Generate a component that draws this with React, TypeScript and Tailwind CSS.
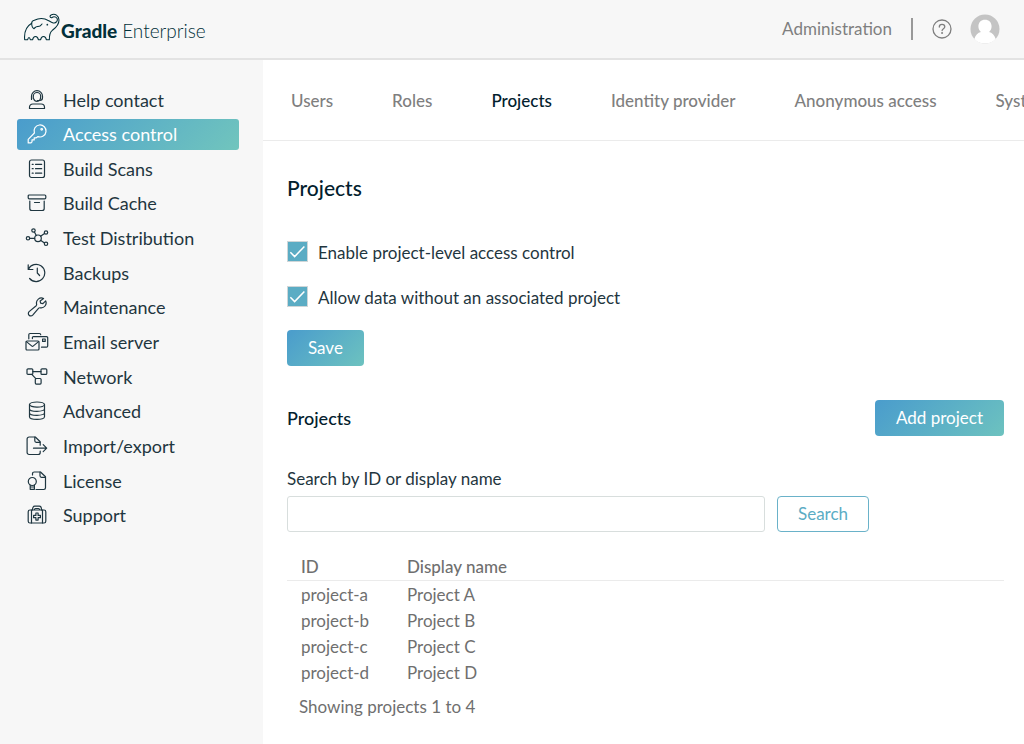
import type { ReactNode } from 'react';

interface NavItem {
  label: string;
  icon: ReactNode;
}

interface CheckboxProps {
  id: string;
  label: string;
}

const NAV: NavItem[] = [
  {
    label: 'Help contact',
    icon: (
      <>
        <path d="M4.5 18.5v-1.2c0-2 1.400-3.300 3.300-3.300h8.400c1.900 0 3.300 1.300 3.300 3.300v1.200z" />
        <path d="M6.500 9.500V6.200a5.500 5.500 0 0 1 11 0v1.600c0 1.600-1 2.700-2.700 2.700h-2.300" />
        <path d="M8.300 8.500V6.200a3.700 3.700 0 0 1 7.400 0c0 3-1.600 5.100-3.700 5.100-1.500 0-2.800-1-3.400-2.600" />
      </>
    ),
  },
  {
    label: 'Access control',
    icon: (
      <>
        <path d="M9.400 9A6 6 0 1 1 13 12.600l-1.700 1.200H9.200v2.100H7v2L6 18.900H3.200v-3.500z" />
        <circle cx="16.700" cy="5.300" r=".8" />
      </>
    ),
  },
  {
    label: 'Build Scans',
    icon: (
      <>
        <rect x="4.500" y="1" width="15" height="17.500" rx="2" />
        <path d="M7.200 5.300h1M10.500 5.300h6.200M7.200 9.700h1M10.500 9.700h6.200M7.200 14.200h1M10.500 14.200h6.200" />
      </>
    ),
  },
  {
    label: 'Build Cache',
    icon: (
      <>
        <rect x="3.200" y="2" width="17.600" height="3.800" rx="1" />
        <path d="M4.800 8v7.500a2 2 0 0 0 2 2h10.400a2 2 0 0 0 2-2V8M9.500 9.500h5" />
      </>
    ),
  },
  {
    label: 'Test Distribution',
    icon: (
      <>
        <circle cx="13" cy="10.300" r="3.300" />
        <circle cx="3" cy="10.300" r="1.700" />
        <circle cx="8.500" cy="2.500" r="1.700" />
        <circle cx="21" cy="4.500" r="1.700" />
        <circle cx="21" cy="15.800" r="1.700" />
        <path d="M4.700 10.300h5M9.400 4l1.900 3.500M19.500 5.400l-3.900 2.800M19.500 15l-3.600-2.600" />
      </>
    ),
  },
  {
    label: 'Backups',
    icon: (
      <>
        <path d="M3.200 1.800v4.700h4.700M3.400 6.300A8.600 8.600 0 1 1 4.600 15.500" />
        <path d="M12.300 5.200v4.800l2.300 2.500" />
      </>
    ),
  },
  {
    label: 'Maintenance',
    icon: (
      <path d="M18.600 1.500a5 5 0 0 0-7 5.700c.1.600 0 1.100-.4 1.500l-7.100 5.900a2.500 2.500 0 1 0 3.600 3.600l6-7c.4-.4.900-.5 1.500-.4a5 5 0 0 0 5.500-6.900l-2.800 2.700-2.300-.5-.5-2.200z" />
    ),
  },
  {
    label: 'Email server',
    icon: (
      <>
        <rect x="1" y="9" width="13" height="9" rx="1" />
        <path d="m1.400 9.600 5.200 4.300c.5.400 1.300.4 1.800 0l5.200-4.300M16.500 15.200h5c.7 0 1.200-.5 1.200-1.200V5.800c0-.7-.5-1.200-1.200-1.200H8.400c-.6 0-1 .4-1 1v1M3.800 6.800V2.700c0-.7.500-1.200 1.200-1.200h9.500c.7 0 1.200.5 1.200 1.200" />
        <rect x="17.600" y="7" width="2.600" height="2.400" />
      </>
    ),
  },
  {
    label: 'Network',
    icon: (
      <>
        <rect x="2" y="1.800" width="5.800" height="5.600" rx="1" />
        <rect x="16" y="1.800" width="5.800" height="5.600" rx="1" />
        <rect x="10.300" y="11.500" width="5.800" height="5.600" rx="1" />
        <path d="M7.800 4.600H16M6.800 7.400l4 4.300" />
      </>
    ),
  },
  {
    label: 'Advanced',
    icon: (
      <>
        <ellipse cx="12" cy="3.600" rx="7.500" ry="2.600" />
        <path d="M4.500 3.600v12.100c0 1.500 3.300 2.700 7.500 2.700s7.500-1.200 7.500-2.700V3.600M4.500 7.700c0 1.400 3.300 2.600 7.500 2.600s7.500-1.200 7.500-2.600M4.500 11.700c0 1.400 3.300 2.600 7.500 2.600s7.500-1.200 7.500-2.600" />
      </>
    ),
  },
  {
    label: 'Import/export',
    icon: (
      <>
        <path d="M15.200 15v1.500a2 2 0 0 1-2 2H4.100a2 2 0 0 1-2-2V3a2 2 0 0 1 2-2h6.200l4.900 4.800v3.400" />
        <path d="M9.800 1.200v3.600a1.500 1.500 0 0 0 1.500 1.500h3.600M8.500 12.200h13M18.200 8.700l3.500 3.500-3.500 3.500" />
      </>
    ),
  },
  {
    label: 'License',
    icon: (
      <>
        <path d="M7.500 4V2.800c0-1 .8-1.800 1.800-1.800h6.200L20.500 5.800v11c0 1-.8 1.700-1.700 1.700H11" />
        <path d="M15 1.200v3.600c0 .8.600 1.500 1.500 1.500h3.700" />
        <circle cx="7.300" cy="10.500" r="4" />
        <path d="M5.200 14v4.300h4.200V14M5.500 16h3.600" />
      </>
    ),
  },
  {
    label: 'Support',
    icon: (
      <>
        <rect x="3.200" y="5" width="17.600" height="13" rx="1.800" />
        <path d="M6.500 5v13M17.500 5v13M7.500 5c0-2.300.8-3.800 2.200-3.800h4.600c1.400 0 2.200 1.500 2.200 3.800M9.500 4.500c0-.7.4-1 1-1h3c.6 0 1 .3 1 1" />
        <path d="M10.900 8h2.200v2.400h2.300v2.300h-2.300v2.400h-2.200v-2.400H8.600v-2.300h2.300z" />
      </>
    ),
  },
];

const TABS = ['Users', 'Roles', 'Projects', 'Identity provider', 'Anonymous access', 'System'];

const PROJECTS = [
  { id: 'project-a', name: 'Project A' },
  { id: 'project-b', name: 'Project B' },
  { id: 'project-c', name: 'Project C' },
  { id: 'project-d', name: 'Project D' },
];

function Elephant() {
  return (
    <svg width="36" height="28" viewBox="11 7 108 84" fill="none" stroke="currentColor" strokeWidth="3.200" strokeLinecap="round" strokeLinejoin="round">
      <path d="M13 87c-2-21 4-39 21-49 0-5 3-8 8-9 14-7 31-6 43 1 10 6 18 11 24 3 5-7 0-15-8-15-4 0-5 3-8 3-5 0-5-6-1-8 12-7 24 3 24 15 0 17-11 24-20 31-8 6-9 16-9 28h-9c-2-13-15-13-17 0H54c-2-13-15-13-17 0h-7c-2-9-6-9-8 0z" />
      <path d="M34 38c0 8 2 14 7 16 4-6 10-7 16-7 3 0 5-3 8-7" />
      <circle cx="81" cy="42" r="1" />
    </svg>
  );
}

function Header() {
  return (
    <header className="flex h-[60px] items-center border-b-2 border-[#e3e3e3] bg-[#f7f7f7] px-6">
      <a href="#" className="flex items-center gap-px text-[19px] leading-6 text-[#02303a]">
        <span className="pb-1">
          <Elephant />
        </span>
        <span className="pt-1">
          <span className="font-black">Gradle</span> <span className="font-light">Enterprise</span>
        </span>
      </a>
      <div className="ml-auto flex items-center text-[#7f7f7f]">
        <a href="#" className="text-[17px]">Administration</a>
        <span className="ml-[19px] h-[22px] w-[2px] bg-[#999]" />
        <button type="button" aria-label="Help" className="ml-[19px]">
          <svg width="20" height="20" viewBox="0 0 20 20" fill="none" stroke="currentColor" strokeWidth="1.300" className="block">
            <circle cx="10" cy="10" r="9" />
            <path d="M7.300 8c0-1.600 1.100-2.600 2.700-2.600s2.800 1 2.800 2.400c0 1.900-2.700 1.900-2.700 3.800" strokeLinecap="round" />
            <circle cx="10.100" cy="14" r=".4" />
          </svg>
        </button>
        <button type="button" aria-label="Account" className="ml-[18px]">
          <svg width="30" height="30" viewBox="0 0 30 30" className="block">
            <circle cx="15" cy="15" r="14.500" fill="#c4c4c4" />
            <path d="M15 5.800c3.900 0 6.600 2.700 6.600 6.500 0 2.300-.9 4.400-2.500 5.700 3 .7 5.300 2.800 6.600 6.900C22.900 28 19.300 29.500 15 29.500S7.100 28 4.300 24.900c1.300-4.100 3.600-6.200 6.600-6.900-1.600-1.300-2.500-3.400-2.500-5.700 0-3.800 2.700-6.500 6.600-6.500z" fill="#fff" />
          </svg>
        </button>
      </div>
    </header>
  );
}

function Sidebar({ active }: { active: string }) {
  return (
    <nav className="w-[263px] shrink-0 bg-[#f7f7f7] pl-[17px] pr-6 pt-6">
      <ul className="flex h-[447px] flex-col justify-between">
        {NAV.map(({ label, icon }) => (
          <li key={label}>
            <a
              href="#"
              className={`flex h-[31px] items-center gap-[14px] rounded-[3px] pl-2 text-lg ${
                label === active ? 'bg-linear-135 from-[#4a9ccc] to-[#71c5bd] text-white' : 'text-[#1f3640]'
              }`}
            >
              <svg width="24" height="20" viewBox="0 0 24 20" fill="none" stroke="currentColor" strokeWidth="1.200" strokeLinecap="round" strokeLinejoin="round" className="shrink-0">
                {icon}
              </svg>
              {label}
            </a>
          </li>
        ))}
      </ul>
    </nav>
  );
}

function Tabs({ active }: { active: string }) {
  return (
    <nav className="flex h-[81px] items-center gap-[59px] overflow-hidden border-b border-[#ebebeb] pl-7 pt-px text-[17px] font-medium">
      {TABS.map((tab) => (
        <a key={tab} href="#" className={`whitespace-nowrap ${tab === active ? 'text-[#02202d]' : 'text-[#7f7f7f]'}`}>
          {tab}
        </a>
      ))}
    </nav>
  );
}

function Checkbox({ id, label }: CheckboxProps) {
  return (
    <div className="flex items-center">
      <span className="relative -mt-1 h-[21px] w-[21px]">
        <input
          id={id}
          type="checkbox"
          defaultChecked
          className="peer block h-[21px] w-[21px] appearance-none border border-[#cfd6d8] bg-white checked:bg-[#5bacc4]"
        />
        <svg viewBox="0 0 22 22" className="pointer-events-none absolute inset-0 hidden peer-checked:block" fill="none" stroke="#fff" strokeWidth="1.600">
          <path d="M3.500 11.800 8 16.300 18.200 5.800" />
        </svg>
      </span>
      <label htmlFor={id} className="pl-[10px]">{label}</label>
    </div>
  );
}

export default function App() {
  return (
    <div className="flex min-h-screen flex-col bg-white font-['Lato',sans-serif] text-[#1f3640]">
      <Header />
      <div className="flex grow">
        <Sidebar active="Access control" />
        <main className="min-w-0 grow">
          <Tabs active="Projects" />
          <div className="pl-6 pr-5 pt-8 text-[17px] leading-6">
            <h1 className="text-[21px] leading-[30px] font-medium text-[#02202d]">Projects</h1>
            <form className="mt-[38px]">
              <div className="flex flex-col gap-[21px]">
                <Checkbox id="enable-access" label="Enable project-level access control" />
                <Checkbox id="allow-unassociated" label="Allow data without an associated project" />
              </div>
              <button type="button" className="mt-5 block h-9 rounded bg-linear-135 from-[#4a9ccc] to-[#6dc2bf] px-[21px] text-white">
                Save
              </button>
            </form>
            <div className="mt-[34px] flex items-center justify-between">
              <h2 className="text-lg leading-6 font-medium text-[#02202d]">Projects</h2>
              <button type="button" className="h-9 rounded bg-linear-135 from-[#4a9ccc] to-[#6dc2bf] px-[21px] text-white">
                Add project
              </button>
            </div>
            <form className="mt-[31px]">
              <label htmlFor="project-search" className="block">Search by ID or display name</label>
              <div className="mt-[5px] flex gap-3">
                <input id="project-search" type="text" className="h-9 w-2/3 rounded-[3px] border border-[#d8dedd] px-3" />
                <button type="button" className="h-9 rounded border border-[#6ab2c9] px-5 text-[#5bacc4]">
                  Search
                </button>
              </div>
            </form>
            <table className="mt-[23px] w-full text-left text-[#6f6f6f]">
              <thead>
                <tr className="border-b border-[#ebebeb]">
                  <th className="w-[120px] pl-[14px] pb-px font-medium">ID</th>
                  <th className="pb-px font-medium">Display name</th>
                </tr>
              </thead>
              <tbody>
                {PROJECTS.map((p) => (
                  <tr key={p.id}>
                    <td className="pl-[14px] pt-[2px]">{p.id}</td>
                    <td className="pt-[2px]">{p.name}</td>
                  </tr>
                ))}
              </tbody>
            </table>
            <p className="mt-[10px] pl-3 text-[#6f6f6f]">Showing projects 1 to 4</p>
          </div>
        </main>
      </div>
    </div>
  );
}
